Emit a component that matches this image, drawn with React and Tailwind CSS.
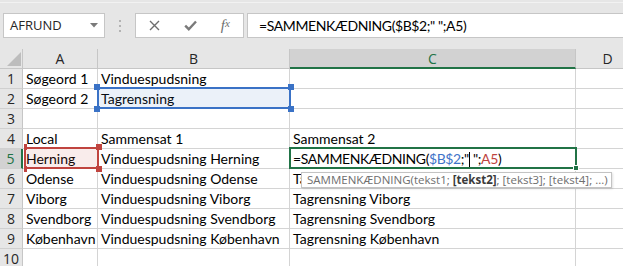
import React from 'react';

const cellFont = "font-['Lato',sans-serif]";
const uiFont = "font-['Open_Sans',sans-serif]";

const columns = [
  { key: 'A', w: 'w-[75px]' },
  { key: 'B', w: 'w-[192px]' },
  { key: 'C', w: 'w-[286px]' },
  { key: 'D', w: 'w-[64px]' },
];

const rows = [
  ['Søgeord 1', 'Vinduespudsning', '', ''],
  ['Søgeord 2', 'Tagrensning', '', ''],
  ['', '', '', ''],
  ['Local', 'Sammensat 1', 'Sammensat 2', ''],
  ['Herning', 'Vinduespudsning Herning', 'FORMULA', ''],
  ['Odense', 'Vinduespudsning Odense', 'Tagrensning Odense', ''],
  ['Viborg', 'Vinduespudsning Viborg', 'Tagrensning Viborg', ''],
  ['Svendborg', 'Vinduespudsning Svendborg', 'Tagrensning Svendborg', ''],
  ['København', 'Vinduespudsning København', 'Tagrensning København', ''],
  ['', '', '', ''],
];

// formula being edited in C5, with the reference colours
const Formula = () => (
  <span className="whitespace-pre tracking-[-0.4px]">
    =SAMMENKÆDNING(<span className="text-[#3f74c9]">$B$2</span>;"
    <span className="inline-block w-px h-[15px] bg-black align-[-3px]" />
    {' ";'}
    <span className="text-[#c0443f]">A5</span>)
  </span>
);

const Handle = ({ className }) => <div className={`absolute h-[6px] ${className}`} />;

const Toolbar = () => (
  <div className="h-[49px] bg-[#e6e6e6] flex flex-col">
    <div className="mt-[2px] h-px bg-[#f2f2f2]" />
    <div className="flex items-start mt-[10px]">
      <div className={`ml-[3px] w-[102px] h-[25px] bg-white border border-[#c6c6c6] flex items-center justify-between pl-[6px] pr-[6px] ${uiFont} text-[13px] text-[#262626]`}>
        <span>AFRUND</span>
        <svg width="8" height="5" viewBox="0 0 8 5">
          <path d="M0 0h8L4 4.5z" fill="#7a7a7a" />
        </svg>
      </div>
      <div className="w-[30px] h-[25px] flex flex-col items-center justify-center gap-[3px]">
        <div className="w-[2px] h-[2px] bg-[#b3b3b3]" />
        <div className="w-[2px] h-[2px] bg-[#b3b3b3]" />
        <div className="w-[2px] h-[2px] bg-[#b3b3b3]" />
      </div>
      <div className="w-[109px] h-[25px] bg-white border border-[#c6c6c6] flex items-center">
        <div className="w-[37px] flex justify-center">
          <svg width="11" height="11" viewBox="0 0 11 11">
            <path d="M1 1l9 9M10 1l-9 9" stroke="#6e6e6e" strokeWidth="1.4" />
          </svg>
        </div>
        <div className="w-[36px] flex justify-center">
          <svg width="13" height="11" viewBox="0 0 13 11">
            <path d="M1.2 5.6l3.6 3.6L12 1.5" stroke="#7a7a7a" strokeWidth="2.4" fill="none" />
          </svg>
        </div>
        <div className="w-[36px] flex justify-center font-['Liberation_Serif',serif] italic text-[15px] text-[#6e6e6e] leading-none">
          f<span className="text-[11px]">x</span>
        </div>
      </div>
      <div className={`ml-[3px] flex-1 -mr-[2px] h-[25px] bg-white border border-[#c6c6c6] pl-[11px] flex items-center ${cellFont} text-[14px] tracking-[-0.4px] text-black`}>
        =SAMMENKÆDNING($B$2;" ";A5)
      </div>
    </div>
  </div>
);

const Sheet = () => (
  <div className="relative">
    <div className="flex h-[20px] bg-[#e6e6e6] border-b border-[#c6c6c6]">
      <div className="w-[23px] shrink-0 border-r border-[#c6c6c6] relative">
        <svg className="absolute left-[7px] top-[3px]" width="14" height="14" viewBox="0 0 14 14">
          <path d="M14 0V14H0z" fill="#bdbdbd" />
        </svg>
      </div>
      {columns.map((c) => (
        <div
          key={c.key}
          className={`${c.w} shrink-0 border-r border-[#c6c6c6] flex items-center justify-center ${uiFont} text-[14px] ${
            c.key === 'C' ? 'bg-[#d2d2d2] text-[#217346] border-b-2 border-b-[#217346] -mb-px' : 'text-[#262626]'
          }`}
        >
          {c.key}
        </div>
      ))}
    </div>
    {rows.map((r, i) => {
      const active = i === 4;
      return (
        <div key={i} className="flex h-[20px]">
          <div
            className={`w-[23px] shrink-0 border-b border-[#d0d0d0] flex items-center justify-center ${uiFont} text-[14px] leading-[19px] ${
              active
                ? 'bg-[#d2d2d2] text-[#217346] border-r-2 border-r-[#217346]'
                : 'bg-[#e6e6e6] text-[#262626] border-r border-r-[#c6c6c6]'
            }`}
          >
            {i + 1}
          </div>
          {r.map((v, j) => (
            <div
              key={j}
              className={`${columns[j].w} shrink-0 border-r border-b border-[#d4d4d4] pl-[3px] ${cellFont} text-[14px] leading-[20px] text-black whitespace-nowrap`}
            >
              {v === 'FORMULA' ? <Formula /> : v}
            </div>
          ))}
        </div>
      );
    })}

    {/* B2 reference range */}
    <div className="absolute left-[97px] top-[38px] w-[194px] h-[22px] border-2 border-[#3a72c6] bg-[#3a72c6]/10">
      <Handle className="-left-[5px] -top-[5px] w-[6px] bg-[#3a72c6]" />
      <Handle className="-right-[5px] -top-[5px] w-[6px] bg-[#3a72c6]" />
      <Handle className="-left-[5px] -bottom-[5px] w-[6px] bg-[#3a72c6]" />
      <Handle className="-right-[5px] -bottom-[5px] w-[6px] bg-[#3a72c6]" />
    </div>

    {/* A5 reference range */}
    <div className="absolute left-[24px] top-[98px] w-[75px] h-[22px] border-2 border-[#c0443f] bg-[#c0443f]/10">
      <Handle className="-left-[2px] -top-[5px] w-[3px] bg-[#c0443f]" />
      <Handle className="-right-[5px] -top-[5px] w-[6px] bg-[#c0443f]" />
      <Handle className="-left-[2px] -bottom-[5px] w-[3px] bg-[#c0443f]" />
      <Handle className="-right-[5px] -bottom-[5px] w-[6px] bg-[#c0443f]" />
    </div>

    {/* Active cell C5 */}
    <div className="absolute left-[289px] top-[98px] w-[288px] h-[22px] border-2 border-[#217346]">
      <div className="absolute -right-[4px] -bottom-[4px] w-[6px] h-[6px] bg-[#217346] border border-white" />
    </div>

    {/* Function tooltip */}
    <div className={`absolute left-[301px] top-[123px] w-[311px] h-[16px] bg-white border border-[#c3c3c3] shadow-[1px_1px_2px_rgba(0,0,0,0.12)] pl-[5px] flex items-center ${uiFont} text-[11.5px] text-[#6e6e6e] whitespace-pre`}>
      {'SAMMENKÆDNING(tekst1; '}
      <span className="font-bold text-[#3a3a3a]">[tekst2]</span>
      {'; [tekst3]; [tekst4]; ...)'}
    </div>
  </div>
);

export default function App() {
  return (
    <div className="w-[623px] h-[266px] overflow-hidden bg-white">
      <Toolbar />
      <Sheet />
    </div>
  );
}
